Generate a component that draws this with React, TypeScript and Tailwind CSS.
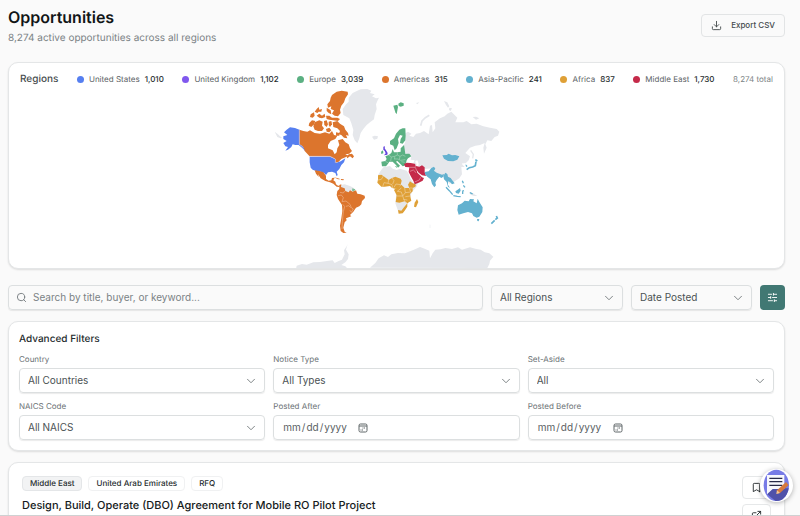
import { ReactNode } from 'react';
import { Bookmark, ChevronDown, Download, ExternalLink, Search, SlidersHorizontal } from 'lucide-react';

interface Region {
  name: string;
  count: string;
  dot: string;
}

const REGIONS: Region[] = [
  { name: 'United States', count: '1,010', dot: 'bg-[#567ff0]' },
  { name: 'United Kingdom', count: '1,102', dot: 'bg-[#8058ee]' },
  { name: 'Europe', count: '3,039', dot: 'bg-[#5bb082]' },
  { name: 'Americas', count: '315', dot: 'bg-[#dc752d]' },
  { name: 'Asia-Pacific', count: '241', dot: 'bg-[#63b1cf]' },
  { name: 'Africa', count: '837', dot: 'bg-[#dfa036]' },
  { name: 'Middle East', count: '1,730', dot: 'bg-[#c52a4a]' },
];

const CARD = 'rounded-[10px] border border-[#e4e6e7] bg-white shadow-[0_1px_2px_rgba(0,0,0,0.12)]';
const CONTROL = 'h-[25px] w-full rounded-[4px] border border-[#dcdfe0] text-[10px] text-[#4b5254] shadow-[0_1px_1px_rgba(0,0,0,0.08)]';

interface SelectProps {
  id: string;
  label: string;
  options: string[];
}

const Select = ({ id, label, options }: SelectProps) => (
  <div className="relative">
    <select id={id} aria-label={label} className={`${CONTROL} block appearance-none bg-transparent pr-6 pl-2`}>
      {options.map((option) => (
        <option key={option}>{option}</option>
      ))}
    </select>
    <ChevronDown strokeWidth={1.5} className="pointer-events-none absolute top-[6px] right-[7px] size-[14px] text-[#6d7476]" />
  </div>
);

const Field = ({ id, label, children }: { id: string; label: string; children: ReactNode }) => (
  <div className="flex flex-col gap-[3px]">
    <label htmlFor={id} className="text-[8px] leading-[11px] text-[#6b7275]">{label}</label>
    {children}
  </div>
);

const DateInput = ({ id }: { id: string }) => (
  <div className={`${CONTROL} relative flex items-center px-2`}>
    <input
      id={id}
      type="date"
      className="w-[88px] bg-transparent text-[10px] text-[#5a6163] [&::-webkit-calendar-picker-indicator]:size-[10px] [&::-webkit-calendar-picker-indicator]:p-0 [&::-webkit-calendar-picker-indicator]:opacity-0"
    />
    <svg viewBox="0 0 20 20" fill="none" stroke="#5f6668" strokeWidth="2" className="pointer-events-none absolute left-[84px] size-[10px]">
      <rect x="2" y="2" width="16" height="16" rx="3" />
      <path d="M2 6H18" />
      <path d="M9 10H15M5 14H11" strokeDasharray="2 1" />
    </svg>
  </div>
);

const WorldMap = () => (
  <svg viewBox="0 0 2325 540" className="block w-full" role="img" aria-label="Opportunities by region">
    {/* north america */}
    <g transform="translate(783 -9)">
      <g fill="#e5e7eb">
        <path d="M236 50L236 38L248 24L262 17L272 13L292 12L304 17L300 24L314 28L306 34L318 40L327 38L322 48L318 58L320 72L314 90L312 103L300 112L290 120L280 132L272 144L268 160L262 175L254 166L248 150L250 135L244 115L238 100L220 90L218 72L228 58Z" />
        <path d="M306 155L314 152L324 154L322 161L312 164Z" />
        <path d="M14 140L24 148L30 154L36 158L32 160L22 156Z" />
      </g>
      <g fill="#dc752d">
        <path d="M186 30L200 20L215 17L233 20L234 28L226 40L222 52L214 62L210 74L212 84L204 94L194 92L186 86L192 76L182 72L184 64L174 68L172 58L180 48L182 38Z" />
        <path d="M170 68L182 76L184 88L176 84L170 78Z" />
        <path d="M140 72L146 66L148 74L156 72L154 80L146 80L142 84L134 80Z" />
        <path d="M122 88L132 82L134 92L128 98L120 96Z" />
        <path d="M140 92L148 86L156 92L164 86L166 96L156 100L148 98Z" />
        <path d="M168 92L178 92L186 98L202 98L210 102L204 108L190 106L178 104L170 102Z" />
        <path d="M118 114L126 106L136 108L132 118L124 126L116 122Z" />
        <path d="M134 112L148 106L158 110L156 122L162 130L156 138L144 138L134 134L130 124Z" />
        <path d="M162 108L170 106L174 118L170 126L163 120Z" />
        <path d="M176 110L184 108L186 118L180 126L176 120Z" />
        <path d="M168 132L178 128L184 136L178 142L170 140Z" />
        <path d="M188 112L202 108L210 116L222 124L226 134L234 144L236 152L228 150L232 160L222 158L214 150L206 148L210 138L202 130L190 126Z" />
        <path d="M198 142L208 144L208 152L198 152Z" />
        <path d="M88 134L100 138L112 140L120 136L134 144L150 146L165 142L178 146L186 138L192 150L202 152L196 162L182 168L174 180L174 190L188 196L194 208L200 202L202 190L208 180L204 166L218 162L226 172L236 178L240 190L246 198L238 206L226 208L236 212L228 216L214 222L206 230L196 233L196 222L180 214L118 213L104 198L98 184L88 178Z" />
        <path d="M236 208L246 206L252 214L248 220L240 214L232 220L230 216Z" />
      </g>
      <g fill="#567ff0">
        <path d="M50 134L60 127L75 129L88 134L88 178L98 184L106 198L96 188L86 180L76 180L68 178L64 186L54 194L46 197L54 186L46 184L40 174L50 168L40 162L40 154L52 150L42 142Z" />
        <path d="M119 215L180 215L195 222L197 234L212 229L226 220L222 232L214 240L208 252L200 260L203 270L200 274L196 264L186 260L174 262L168 270L162 264L152 260L138 258L128 254L122 248L119 232Z" />
      </g>
      <path d="M88 134V178L100 188M118 214H180L196 222V233" fill="none" stroke="#cdb9ce" strokeWidth="2" />
    </g>
    {/* south america and the antarctic peninsula */}
    <g transform="translate(783 231)">
      <path d="M212 60L224 58L240 63L250 68L254 74L248 80L228 82L214 72Z" fill="#e5e7eb" />
      <path d="M247 70L256 73L252 80L246 77Z" fill="#7fbd9b" />
      <g fill="#dc752d">
        <path d="M134 16L148 18L160 22L168 32L168 42L176 47L184 46L186 39L194 38L190 46L196 50L198 58L204 62L210 62L208 66L200 65L190 56L180 52L166 48L152 40L144 28L146 36L138 26Z" />
        <path d="M192 37L204 40L212 43L204 43Z" />
        <path d="M213 42L222 43L220 46L213 45Z" />
        <path d="M208 60L214 58L213 66L224 70L226 78L236 82L240 76L248 80L258 76L262 86L272 88L284 92L285 99L276 108L274 118L268 124L258 128L250 140L240 150L244 154L228 160L230 166L224 172L220 188L224 200L230 203L220 204L212 198L210 182L214 160L217 138L216 120L204 102L200 90L202 78L208 72Z" />
      </g>
      <path d="M224 78L220 84L210 82M204 92L214 90L220 98L216 110L228 108L240 118L244 128L250 132L244 142L240 136M218 118L224 124L220 140L217 170L216 192M228 124L236 122L242 128" fill="none" stroke="#efb48b" strokeWidth="2" />
      <path d="M78 312L80 302L96 297L110 299L130 292L150 291L176 287L188 286L194 294L206 288L216 284L224 268L222 256L230 244L233 236L228 254L236 268L234 282L226 292L214 300L226 304L234 312Z" fill="#e5e7eb" />
    </g>
    {/* europe and northern asia */}
    <g transform="translate(1083 -9)">
      <g fill="#e5e7eb">
        <path d="M106 145L114 140L124 146L118 152L130 156L138 146L150 144L162 138L176 148L180 122L186 120L188 142L196 130L194 112L210 100L224 94L232 86L244 80L262 98L256 112L280 112L290 108L304 118L320 116L340 124L360 128L380 132L388 140L384 152L374 156L364 168L352 166L346 178L350 188L342 206L340 188L344 174L330 180L316 182L300 188L286 204L300 214L296 226L284 238L276 234L284 246L274 246L276 268L268 280L252 290L238 296L222 274L200 266L186 250L166 252L150 246L138 242L130 234L134 226L122 224L124 212L106 204L100 186L106 170Z" />
        <path d="M222 48L232 52L238 64L234 68L228 60Z" />
        <path d="M238 68L246 70L242 78L237 75Z" />
        <path d="M308 96L318 95L328 100L318 104Z" />
        <path d="M138 54L148 52L142 58Z" />
      </g>
      <path d="M152 122L156 108L166 98L178 91" fill="none" stroke="#e5e7eb" strokeWidth="5" />
      <path d="M302 196L310 208L308 220" fill="none" stroke="#e5e7eb" strokeWidth="4" />
      <path d="M136 228L142 226L146 236L144 246L138 240Z" fill="#fff" />
      <g fill="#5bb082">
        <path d="M70 62L82 59L84 66L80 88L76 82Z" />
        <path d="M85 56L92 52L101 55L101 62L92 65L86 63Z" />
        <path d="M60 178L60 168L72 160L78 146L88 134L98 130L106 130L107 152L106 166L98 176L90 174L92 162L98 152L90 150L84 162L86 174L80 190L74 196L70 182Z" />
        <path d="M34 230L46 228L50 222L46 214L56 210L64 204L68 192L72 202L82 202L92 200L92 190L102 180L104 192L106 206L118 206L124 214L114 220L110 226L108 234L104 242L98 244L92 238L82 228L78 230L90 242L84 248L78 240L68 230L58 230L54 236L48 244L36 244Z" />
        <path d="M33 200L39 196L40 205L34 207Z" />
        <path d="M74 243L82 245L80 248Z" />
      </g>
      <path d="M56 210L64 216L62 228M64 216L74 214L82 210L90 214L98 210M72 222L84 222L92 226L106 224M82 210V202M90 214L88 224M98 210L106 214M94 230L104 232M46 229L54 233M74 214V222" fill="none" stroke="#a2d3b7" strokeWidth="2" />
      <path d="M40 185L45 184L44 190L48 196L53 204L52 209L42 211L47 205L44 198L40 194Z" fill="#6344dd" />
      <path d="M217 211L230 210L236 206L246 211L256 210L268 214L262 224L250 229L234 228L222 221Z" fill="#63b1cf" />
      <path d="M276 236L286 234L290 242L292 248L286 246L278 240Z" fill="#fff" />
      <path d="M287 238L292 242L291 247L287 243Z" fill="#63b1cf" />
      <path d="M316 224L322 228M318 230L316 242L308 246L298 248L290 254" fill="none" stroke="#63b1cf" strokeWidth="5" />
    </g>
    {/* africa, middle east, south asia, oceania and antarctica */}
    <g transform="translate(1083 186)">
      <g fill="#e5e7eb">
        <path d="M24 76L32 62L40 52L60 48L68 56L80 60L90 56L110 62L116 72L122 86L130 98L144 98L140 110L126 126L104 180L86 188L76 160L80 120L60 108L30 100Z" />
        <path d="M0 353L16 339L26 325L42 316L54 321L64 313L84 309L104 310L130 300L150 291L164 296L178 302L180 325L188 310L196 299L212 298L226 294L246 297L264 292L276 299L300 292L316 296L332 299L344 307L358 310L370 320L360 332L358 342L352 354Z" />
        <path d="M296 125L308 130L322 138L312 138L302 134Z" />
      </g>
      <g fill="#dfa036">
        <path d="M24 76L34 74L40 78L56 90L66 84L76 80L92 86L95 92L92 104L84 114L76 116L66 114L60 108L44 110L34 110L22 98L24 88Z" />
        <path d="M76 116L86 110L94 104L104 114L118 114L114 104L120 94L126 98L138 104L136 110L128 114L128 124L120 132L122 144L124 152L112 160L112 170L104 182L98 190L86 191L84 180L94 182L102 172L112 160L104 154L88 158L77 156L80 136L72 120Z" />
        <path d="M141 147L145 156L138 172L132 170L134 158Z" />
      </g>
      <path d="M40 78L34 88L24 90M56 90L54 100L42 98L38 110M54 100L66 104L68 114M66 84L72 92L68 102M92 104L78 102L72 112M94 114L82 124L94 126L98 138L80 138M104 114L106 128L98 138L104 154M118 114L122 126L106 128M120 138L106 140M112 150L100 148M112 160L104 154M128 114L118 114" fill="none" stroke="#f0d09d" strokeWidth="2" />
      <g fill="#c52a4a">
        <path d="M102 42L110 38L122 39L134 41L138 48L148 50L156 46L164 52L164 66L168 78L156 76L146 68L140 60L142 68L150 76L156 82L162 84L158 92L146 98L134 103L130 92L122 78L116 66L118 52L106 51Z" />
      </g>
      <path d="M118 52H136L140 62M120 64L130 60L138 68M136 50L138 41M134 96L148 90L152 82" fill="none" stroke="#e6a0ad" strokeWidth="2" />
      <g fill="#63b1cf">
        <path d="M166 74L164 66L176 64L184 54L192 50L196 56L192 62L200 68L216 74L222 72L220 80L214 84L208 80L200 90L196 98L198 106L193 112L186 102L182 88L172 80Z" />
        <path d="M220 78L226 68L232 72L234 80L242 84L248 92L254 100L246 103L240 96L234 94L234 104L240 114L234 110L230 96L222 88Z" />
        <path d="M256 124L262 120L270 114L272 122L266 131L258 129Z" />
        <path d="M264 166L276 160L284 152L296 154L300 147L312 148L310 154L320 160L323 146L328 156L338 172L337 186L328 200L320 203L310 198L306 190L294 186L280 190L266 194L262 180Z" />
        <path d="M321 207L328 207L326 214L322 213Z" />
      </g>
      <g fill="none" stroke="#63b1cf" strokeWidth="4">
        <path d="M228 112L238 122L248 134M250 137L262 139L272 140M276 124L282 122M278 122V132M277 92L280 100M280 106L285 112M300 128L308 132" />
        <path d="M379 198L382 204L376 209M374 211L364 221" strokeWidth="5" />
      </g>
      <path d="M180 224V234" stroke="#eceef1" strokeWidth="2" />
    </g>
  </svg>
);

const ChatWidget = () => (
  <button type="button" aria-label="Open chat" className="fixed right-[7px] bottom-[14px] size-[33px] rounded-full bg-white shadow-[0_1px_5px_rgba(0,0,0,0.3)]">
    <svg viewBox="0 0 99 99" className="size-full">
      <clipPath id="chat-face">
        <ellipse cx="49" cy="49" rx="38" ry="47" />
      </clipPath>
      <g clipPath="url(#chat-face)">
        <path d="M0 0H99V99H0Z" fill="#777be6" />
        <path d="M22 72L38 58H99V99H50L22 76Z" fill="#5052a9" />
        <path d="M21 18H73V60H38L21 76Z" fill="#f8f8fc" />
        <path d="M28 28H67M28 38H67M28 49H67" stroke="#282a48" strokeWidth="4" />
      </g>
      <path d="M51 64L78 39L86 48L60 72L50 74Z" fill="#d7793d" />
      <path d="M51 64L60 72L49 75Z" fill="#efc69a" />
    </svg>
  </button>
);

const App = () => (
  <div className="h-screen overflow-hidden border-b border-[#cfd1d2] bg-[#fafafa] pt-[6px] pr-[15px] pl-2 font-['Inter',sans-serif] text-[#252b2d] [text-rendering:geometricPrecision]">
    <header className="flex items-center justify-between">
      <div>
        <h1 className="text-[16px] leading-[22px] font-semibold text-[#111516]">Opportunities</h1>
        <p className="mt-1 text-[10px] leading-3 text-[#7b8285]">8,274 active opportunities across all regions</p>
      </div>
      <button type="button" className="flex h-[23px] items-center gap-[9px] rounded-[4px] border border-[#e2e4e5] px-[9px] text-[8px] font-medium text-[#454b4d]">
        <Download className="size-[11px]" />
        Export CSV
      </button>
    </header>

    <section className={`${CARD} mt-[18px] overflow-hidden`}>
      <div className="flex items-center justify-between px-[11px] pt-[9px] pb-[2px] text-[8px] leading-[14px] whitespace-nowrap">
        <h2 className="text-[10px] font-medium text-[#454b4d]">Regions</h2>
        {REGIONS.map(({ name, count, dot }) => (
          <div key={name} className="flex items-center gap-[5px]">
            <span className={`size-[7px] rounded-full ${dot}`} />
            <span className="text-[#5b6265]">{name}</span>
            <span className="font-medium">{count}</span>
          </div>
        ))}
        <span className="text-[#7b8285]">8,274 total</span>
      </div>
      <WorldMap />
    </section>

    <div className="mt-4 flex gap-2">
      <label className={`${CONTROL} flex flex-1 items-center gap-[6px] px-[7px]`}>
        <Search className="size-[11px] text-[#747b7e]" />
        <input
          type="text"
          aria-label="Search opportunities"
          placeholder="Search by title, buyer, or keyword..."
          className="flex-1 bg-transparent text-[10px] outline-none placeholder:text-[#7b8285]"
        />
      </label>
      <div className="w-[132px]">
        <Select id="region" label="Region" options={['All Regions', ...REGIONS.map(({ name }) => name)]} />
      </div>
      <div className="w-[121px]">
        <Select id="sort" label="Sort by" options={['Date Posted', 'Deadline']} />
      </div>
      <button type="button" aria-label="Advanced filters" className="flex size-[25px] items-center justify-center rounded-[4px] bg-[#417873] text-white">
        <SlidersHorizontal className="size-[11px]" />
      </button>
    </div>

    <section className={`${CARD} mt-[11px] p-[10px]`}>
      <h2 className="text-[10px] leading-[14px] font-medium">Advanced Filters</h2>
      <div className="mt-2 grid grid-cols-3 gap-2">
        <Field id="country" label="Country">
          <Select id="country" label="Country" options={['All Countries', 'United Arab Emirates']} />
        </Field>
        <Field id="notice-type" label="Notice Type">
          <Select id="notice-type" label="Notice Type" options={['All Types', 'RFQ']} />
        </Field>
        <Field id="set-aside" label="Set-Aside">
          <Select id="set-aside" label="Set-Aside" options={['All']} />
        </Field>
        <Field id="naics" label="NAICS Code">
          <Select id="naics" label="NAICS Code" options={['All NAICS']} />
        </Field>
        <Field id="posted-after" label="Posted After">
          <DateInput id="posted-after" />
        </Field>
        <Field id="posted-before" label="Posted Before">
          <DateInput id="posted-before" />
        </Field>
      </div>
    </section>

    <article className={`${CARD} mt-[11px] flex justify-between p-[13px]`}>
      <div>
        <div className="flex gap-[6px] text-[8px] leading-[13px] font-medium">
          <span className="rounded-[4px] border border-[#e4e6e8] bg-[#f2f3f4] px-[7px]">Middle East</span>
          <span className="rounded-[4px] border border-[#f0f1f2] px-[7px]">United Arab Emirates</span>
          <span className="rounded-[4px] border border-[#f0f1f2] px-[7px]">RFQ</span>
        </div>
        <h3 className="mt-[6px] text-[11px] leading-4 font-medium text-[#151a1b]">
          Design, Build, Operate (DBO) Agreement for Mobile RO Pilot Project
        </h3>
      </div>
      <div className="flex flex-col gap-[5px]">
        <button type="button" aria-label="Save" className="flex h-[23px] w-[29px] items-center justify-center rounded-[4px] border border-[#e6e8e9]">
          <Bookmark className="size-[11px]" />
        </button>
        <button type="button" aria-label="Open notice" className="flex h-[23px] w-[29px] items-center justify-center rounded-[4px] border border-[#e6e8e9]">
          <ExternalLink className="size-[11px]" />
        </button>
      </div>
    </article>

    <ChatWidget />
  </div>
);

export default App;
